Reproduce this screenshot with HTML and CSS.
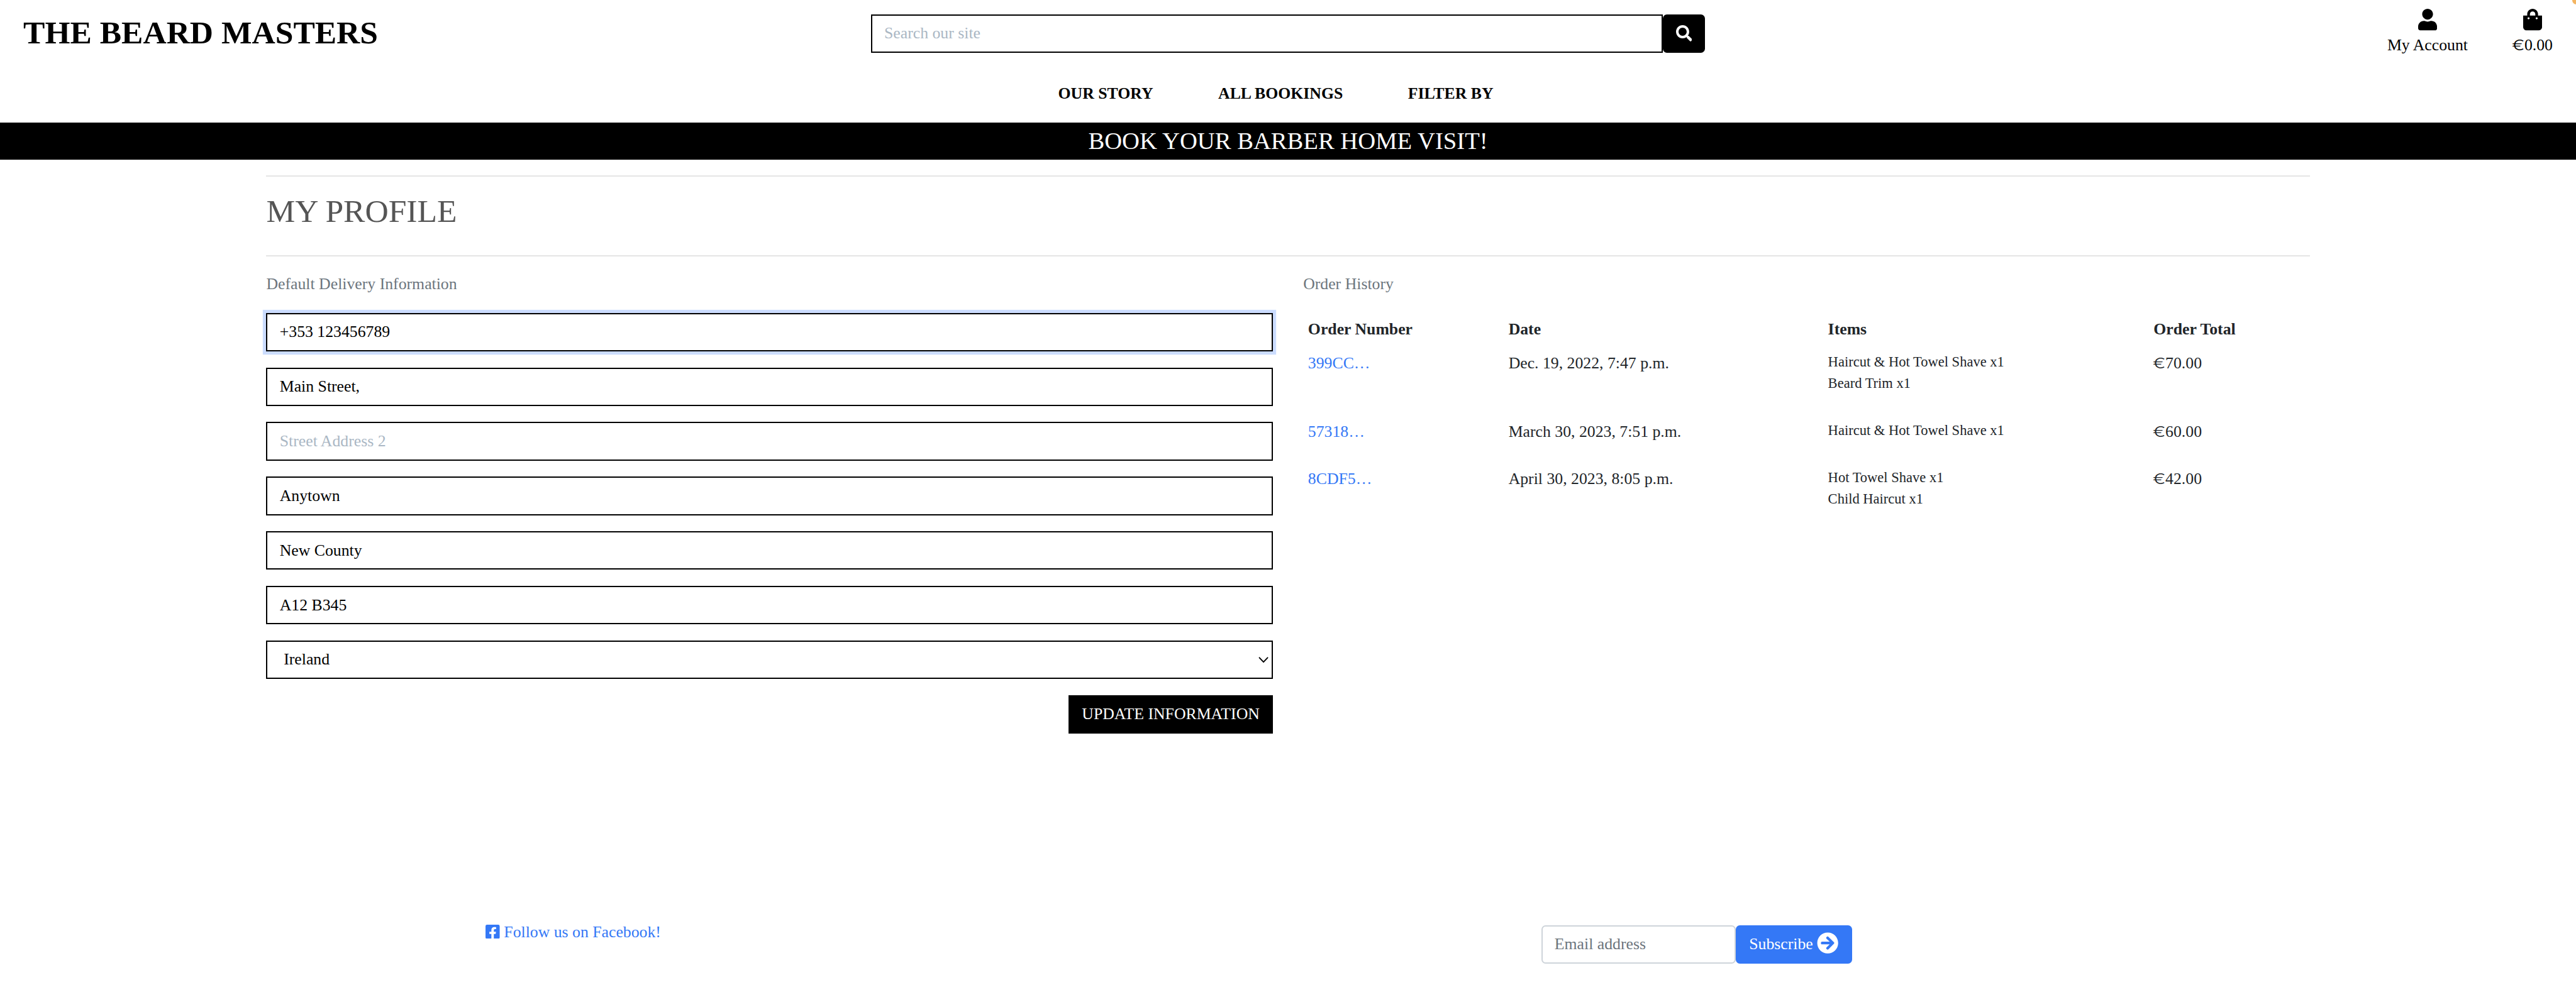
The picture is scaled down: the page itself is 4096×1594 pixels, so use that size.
FILE: index.html
```html
<!DOCTYPE html>
<html lang="en">
<head>
<meta charset="utf-8">
<title>The Beard Masters</title>
<link rel="stylesheet" href="styles.css">
</head>
<body>
<header class="site-header">
  <div class="top-row">
    <a class="brand" href="#">THE BEARD MASTERS</a>
    <form class="search">
      <input class="field search-field" type="text" placeholder="Search our site">
      <button class="search-button" type="button" aria-label="Search">
        <svg class="icon-search" viewBox="0 0 512 512"><path d="M505 442.7L405.3 343c-4.5-4.5-10.6-7-17-7H372c27.6-35.3 44-79.7 44-128C416 93.1 322.9 0 208 0S0 93.1 0 208s93.1 208 208 208c48.3 0 92.7-16.4 128-44v16.3c0 6.4 2.5 12.5 7 17l99.7 99.7c9.4 9.4 24.6 9.4 33.9 0l28.3-28.3c9.4-9.4 9.4-24.6.1-34zM208 336c-70.7 0-128-57.2-128-128 0-70.7 57.2-128 128-128 70.7 0 128 57.2 128 128 0 70.7-57.2 128-128 128z"/></svg>
      </button>
    </form>
    <div class="account">
      <a class="account-link" href="#">
        <svg class="icon-account" viewBox="0 0 448 512"><path d="M224 256c70.7 0 128-57.3 128-128S294.7 0 224 0 96 57.3 96 128s57.3 128 128 128zm89.6 32h-16.7c-22.2 10.2-46.9 16-72.9 16s-50.6-5.8-72.9-16h-16.7C60.2 288 0 348.2 0 422.4V464c0 26.5 21.5 48 48 48h352c26.5 0 48-21.5 48-48v-41.6c0-74.2-60.2-134.4-134.4-134.4z"/></svg>
        <span>My Account</span>
      </a>
      <a class="account-link" href="#">
        <svg class="icon-account" viewBox="0 0 448 512"><path d="M352 160v-32C352 57.42 294.579 0 224 0 153.42 0 96 57.42 96 128v32H0v272c0 44.183 35.817 80 80 80h288c44.183 0 80-35.817 80-80V160h-96zm-192-32c0-35.29 28.71-64 64-64s64 28.71 64 64v32H160v-32zm160 120c-13.255 0-24-10.745-24-24s10.745-24 24-24 24 10.745 24 24-10.745 24-24 24zm-192 0c-13.255 0-24-10.745-24-24s10.745-24 24-24 24 10.745 24 24-10.745 24-24 24z"/></svg>
        <span><span class="euro">€</span>0.00</span>
      </a>
    </div>
  </div>
  <nav class="main-nav">
    <a href="#">OUR STORY</a>
    <a href="#">ALL BOOKINGS</a>
    <a href="#">FILTER BY</a>
  </nav>
</header>
<div class="banner">BOOK YOUR BARBER HOME VISIT!</div>
<span class="indicator"></span>

<main class="profile">
  <hr class="rule">
  <h2 class="title">MY PROFILE</h2>
  <hr class="rule">
  <div class="columns">
    <section class="delivery">
      <p class="subtitle">Default Delivery Information</p>
      <form class="delivery-form">
        <input class="field focused" type="text" value="+353 123456789">
        <input class="field" type="text" value="Main Street,">
        <input class="field" type="text" placeholder="Street Address 2">
        <input class="field" type="text" value="Anytown">
        <input class="field" type="text" value="New County">
        <input class="field" type="text" value="A12 B345">
        <div class="field select">
          <span>Ireland</span>
          <svg class="chevron" viewBox="0 0 10 6"><path d="M1 .8 5 5.1 9 .8"/></svg>
        </div>
        <button class="update" type="button">UPDATE INFORMATION</button>
      </form>
    </section>
    <section class="orders">
      <p class="subtitle">Order History</p>
      <table class="order-table">
        <colgroup><col class="col-number"><col class="col-date"><col class="col-items"><col class="col-total"></colgroup>
        <thead>
          <tr><th>Order Number</th><th>Date</th><th>Items</th><th>Order Total</th></tr>
        </thead>
        <tbody>
          <tr>
            <td><a href="#">399CC…</a></td>
            <td>Dec. 19, 2022, 7:47 p.m.</td>
            <td><ul><li>Haircut &amp; Hot Towel Shave x1</li><li>Beard Trim x1</li></ul></td>
            <td><span class="euro">€</span>70.00</td>
          </tr>
          <tr>
            <td><a href="#">57318…</a></td>
            <td>March 30, 2023, 7:51 p.m.</td>
            <td><ul><li>Haircut &amp; Hot Towel Shave x1</li></ul></td>
            <td><span class="euro">€</span>60.00</td>
          </tr>
          <tr>
            <td><a href="#">8CDF5…</a></td>
            <td>April 30, 2023, 8:05 p.m.</td>
            <td><ul><li>Hot Towel Shave x1</li><li>Child Haircut x1</li></ul></td>
            <td><span class="euro">€</span>42.00</td>
          </tr>
        </tbody>
      </table>
    </section>
  </div>
</main>

<footer class="site-footer">
  <a class="facebook" href="#">
    <svg class="icon-facebook" viewBox="0 32 448 448"><path d="M400 32H48A48 48 0 0 0 0 80v352a48 48 0 0 0 48 48h137.25V327.69h-63V256h63v-54.64c0-62.15 37-96.48 93.67-96.48 27.14 0 55.52 4.84 55.52 4.84v61h-31.27c-30.81 0-40.42 19.12-40.42 38.73V256h68.78l-11 71.69h-57.78V480H400a48 48 0 0 0 48-48V80a48 48 0 0 0-48-48z"/></svg>
    <span>Follow us on Facebook!</span>
  </a>
  <form class="subscribe">
    <input class="email" type="text" placeholder="Email address">
    <button class="subscribe-button" type="button">
      <span>Subscribe</span>
      <svg class="icon-arrow" viewBox="0 0 512 512"><path d="M256 8c137 0 248 111 248 248S393 504 256 504 8 393 8 256 119 8 256 8zm-28.9 143.6l75.5 72.4H120c-13.3 0-24 10.7-24 24v16c0 13.3 10.7 24 24 24h182.6l-75.5 72.4c-9.7 9.3-9.9 24.8-.4 34.3l11 10.9c9.4 9.4 24.6 9.4 33.9 0L404.3 273c9.4-9.4 9.4-24.6 0-33.9L271.6 106.3c-9.4-9.4-24.6-9.4-33.9 0l-11 10.9c-9.5 9.6-9.3 25.1.4 34.4z"/></svg>
    </button>
  </form>
</footer>
</body>
</html>
```
FILE: styles.css
```css
/* --u is one layout unit: the page is 2544 units wide. */
:root {
  --u: calc(100vw / 2544);
  --line: 2px;
  --blue: #3478f6;
  --ink: #212529;
  --muted: #6c757d;
}

* { box-sizing: border-box; }

body {
  margin: 0;
  height: calc(990 * var(--u));
  display: flex;
  flex-direction: column;
  overflow: hidden;
  background: #fff;
  color: var(--ink);
  font-family: "Liberation Serif", "Times New Roman", serif;
  font-size: calc(16 * var(--u));
  line-height: 1.5;
}

a { color: inherit; text-decoration: none; }
svg { display: block; fill: currentColor; flex: none; }
input, button { font: inherit; margin: 0; }

/* Header */
.site-header {
  height: calc(121 * var(--u));
  color: #000;
}

.top-row {
  display: grid;
  grid-template-columns: repeat(3, 1fr);
  height: calc(81 * var(--u));
}

.brand {
  padding: calc(13.3 * var(--u)) 0 0 calc(23 * var(--u));
  font-size: calc(32 * var(--u));
  font-weight: 700;
  line-height: 1.2;
}

.search {
  display: flex;
  padding: calc(14 * var(--u)) calc(12 * var(--u)) 0;
}

.field {
  display: block;
  width: 100%;
  height: calc(38 * var(--u));
  padding: 0 calc(12 * var(--u));
  border: var(--line) solid #000;
  border-radius: 0;
  background: #fff;
  color: #000;
  outline: 0;
}

.field::placeholder { color: #aab7c4; opacity: 1; }

.search-field { flex: 1; min-width: 0; }

.search-button {
  width: calc(42 * var(--u));
  height: calc(38 * var(--u));
  padding: calc(10 * var(--u)) calc(13 * var(--u));
  border: 0;
  border-radius: calc(4 * var(--u));
  background: #000;
  color: #fff;
}

.icon-search { width: calc(16 * var(--u)); height: calc(16 * var(--u)); }

.account {
  display: flex;
  justify-content: flex-end;
  gap: calc(44.2 * var(--u));
  padding: calc(8.9 * var(--u)) calc(23 * var(--u)) 0 0;
}

.account-link {
  display: flex;
  flex-direction: column;
  align-items: center;
  gap: calc(2.4 * var(--u));
}

.icon-account { width: calc(18.67 * var(--u)); height: calc(21.33 * var(--u)); }

/* The euro sign is wider and lighter than the digits beside it */
.euro {
  display: inline-block;
  width: calc(11.7 * var(--u));
  font-family: Inter, sans-serif;
  font-size: calc(14.4 * var(--u));
  font-weight: 300;
  line-height: 1;
  text-indent: calc(-0.5 * var(--u));
  transform: scaleX(1.32);
  transform-origin: left;
}

.main-nav {
  display: flex;
  gap: calc(64.3 * var(--u));
  padding-left: calc(1045 * var(--u));
  font-weight: 700;
}

.banner {
  height: calc(36.8 * var(--u));
  padding-top: calc(3.6 * var(--u));
  background: #000;
  color: #fff;
  font-size: calc(24 * var(--u));
  line-height: 1.2;
  text-align: center;
}

/* Recording dot that overlaps the window corner */
.indicator {
  position: absolute;
  top: calc(-3.8 * var(--u));
  right: calc(-4.5 * var(--u));
  width: calc(8 * var(--u));
  height: calc(8 * var(--u));
  border-radius: 50%;
  background: #f4b562;
}

/* Profile */
.profile {
  display: flex;
  flex-direction: column;
  width: calc(2018 * var(--u));
  height: calc(751.7 * var(--u));
  margin: 0 auto;
  padding-top: calc(15.3 * var(--u));
}

.rule {
  width: 100%;
  height: 2px;
  margin: 0;
  border: 0;
  background: #e5e5e5;
}

.title {
  margin: calc(15 * var(--u)) 0 calc(24.5 * var(--u));
  color: #555;
  font-size: calc(32 * var(--u));
  font-weight: 400;
  line-height: 1.2;
}

.columns {
  display: grid;
  grid-template-columns: 1fr 1fr;
  gap: calc(30 * var(--u));
  padding-top: calc(15.6 * var(--u));
}

.subtitle {
  margin: 0 0 calc(16 * var(--u));
  color: var(--muted);
}

.delivery-form {
  display: flex;
  flex-direction: column;
  gap: calc(16 * var(--u));
}

.focused { box-shadow: 0 0 0 calc(3.2 * var(--u)) #cbdcfe; }

.select {
  display: flex;
  align-items: center;
  justify-content: space-between;
  padding: 0 calc(3 * var(--u)) 0 calc(16 * var(--u));
}

.chevron {
  width: calc(10 * var(--u));
  height: calc(6 * var(--u));
  fill: none;
  stroke: #000;
  stroke-width: 1.2;
  stroke-linecap: round;
  stroke-linejoin: round;
}

.update {
  align-self: flex-end;
  width: calc(201.6 * var(--u));
  height: calc(38 * var(--u));
  padding: 0;
  border: 0;
  background: #000;
  color: #fff;
  white-space: nowrap;
}

/* Order history */
.order-table {
  width: 100%;
  table-layout: fixed;
  border-collapse: collapse;
}

.col-number { width: calc(198 * var(--u)); }
.col-date { width: calc(315.5 * var(--u)); }
.col-items { width: calc(321.5 * var(--u)); }
.col-total { width: calc(159 * var(--u)); }

.order-table th,
.order-table td {
  padding: calc(4.8 * var(--u));
  text-align: left;
  vertical-align: top;
}

.order-table a { color: var(--blue); }

.order-table ul {
  margin: 0 0 calc(16 * var(--u));
  padding: 0;
  list-style: none;
  font-size: calc(14 * var(--u));
}

/* Footer */
.site-footer {
  display: flex;
  align-items: flex-start;
}

.facebook {
  display: flex;
  gap: calc(4 * var(--u));
  width: calc(1042.3 * var(--u));
  margin-left: calc(479.7 * var(--u));
  color: var(--blue);
}

.icon-facebook {
  width: calc(14 * var(--u));
  height: calc(14 * var(--u));
  margin-top: calc(4 * var(--u));
}

.subscribe {
  display: flex;
  padding-top: calc(4.5 * var(--u));
}

.email {
  width: calc(192.4 * var(--u));
  height: calc(38 * var(--u));
  padding: 0 calc(12 * var(--u));
  border: var(--line) solid #ced4da;
  border-radius: calc(4 * var(--u));
  background: #fff;
  color: var(--ink);
}

.email::placeholder { color: var(--muted); opacity: 1; }

.subscribe-button {
  display: flex;
  align-items: center;
  gap: calc(4 * var(--u));
  width: calc(114.6 * var(--u));
  height: calc(38 * var(--u));
  padding: 0 calc(13 * var(--u));
  border: 0;
  border-radius: calc(4 * var(--u));
  background: var(--blue);
  color: #fff;
}

.icon-arrow {
  width: calc(21.33 * var(--u));
  height: calc(21.33 * var(--u));
  margin-top: calc(-3 * var(--u));
}
```
